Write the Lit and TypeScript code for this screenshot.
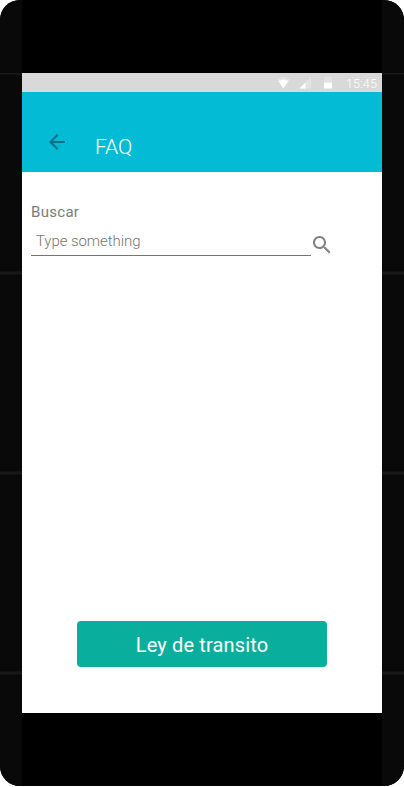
import { LitElement, html, css } from "lit";
import { customElement, property } from "lit/decorators.js";

@customElement("status-bar")
class StatusBar extends LitElement {
  @property() time = "15:45";

  static styles = css`
    :host {
      display: flex;
      align-items: center;
      justify-content: flex-end;
      height: 19px;
      padding-right: 5px;
      background: #d9d9d9;
      color: #fff;
      font: 300 12.5px/19px Roboto, sans-serif;
      letter-spacing: 0.15px;
      flex: none;
    }
    .icons {
      display: block;
      flex: none;
      margin-right: 11px;
    }
    .time {
      padding-top: 2px;
    }
  `;

  render() {
    return html`
      <svg class="icons" width="58" height="19" viewBox="0 0 58 19">
        <path d="M0 6.5Q6.5 1.5 13 6.5L6.5 15.5Z" fill="#fff" fill-opacity=".28" />
        <path d="M1.6 8Q6.5 5 11.4 8L6.5 15.5Z" fill="#fff" />
        <path d="M22.5 15.5L34 4V15.5Z" fill="#fff" fill-opacity=".28" />
        <path d="M22.5 15.5L28.5 9.5V15.5Z" fill="#fff" />
        <path d="M47 9.5V5.3Q47 4.5 47.8 4.5H49V3.5H53V4.5H54.2Q55 4.5 55 5.3V9.5Z" fill="#fff" fill-opacity=".28" />
        <path d="M47 9.5H55V14.7Q55 15.5 54.2 15.5H47.8Q47 15.5 47 14.7Z" fill="#fff" />
      </svg>
      <span class="time">${this.time}</span>
    `;
  }
}

@customElement("app-root")
class AppRoot extends LitElement {
  static styles = css`
    :host {
      display: block;
      height: 787px;
      background: #fff;
      font-family: Roboto, sans-serif;
    }
    * {
      box-sizing: border-box;
    }
    .device {
      display: flex;
      height: 786px;
      border-radius: 20px;
      overflow: hidden;
      background: #000;
    }
    .rail {
      width: 22px;
      flex: none;
      padding-top: 73px;
      background: #090909;
    }
    .seam {
      height: 4px;
      margin-bottom: 196px;
      background: linear-gradient(#111 0 1px, #181818 1px 3px, #111 3px);
    }
    .seam.first {
      height: 2px;
      background: linear-gradient(#191919 0 1px, #111 1px);
    }
    .screen {
      display: flex;
      flex-direction: column;
      width: 360px;
      height: 640px;
      margin-top: 73px;
      background: #fff;
    }
    .bar {
      display: flex;
      height: 80px;
      flex: none;
      background: #03bbd5;
      color: #fff;
    }
    .back {
      display: block;
      width: 24px;
      height: 24px;
      margin: 38px 0 0 22.5px;
    }
    .title {
      margin: 43px 0 0 26.5px;
      font: 300 21px/24px Roboto, sans-serif;
    }
    .content {
      display: flex;
      flex-direction: column;
      flex: 1;
      padding: 30px 9px 46px;
    }
    .label {
      height: 20px;
      color: #7b7b7b;
      font-size: 15px;
      line-height: 20px;
      letter-spacing: 0.3px;
    }
    .search {
      display: flex;
    }
    .field {
      width: 280px;
      height: 34px;
      border: 0;
      border-bottom: 1px solid #757575;
      padding: 5px 5px 0;
      color: #757575;
      font: 300 15px/28px Roboto, sans-serif;
      letter-spacing: -0.07px;
    }
    .find {
      display: block;
      width: 24px;
      height: 24px;
      margin: 11px 0 0 -1px;
    }
    .law {
      width: 250px;
      height: 46px;
      margin: auto auto 0;
      border: 0;
      border-radius: 4px;
      padding: 2px 0 0;
      background: #0aae9d;
      color: #fff;
      font: 400 20px/24px Roboto, sans-serif;
      letter-spacing: 0.15px;
    }
  `;

  private rail() {
    return html`<div class="rail">
      <div class="seam first"></div>
      <div class="seam"></div>
      <div class="seam"></div>
      <div class="seam"></div>
    </div>`;
  }

  render() {
    return html`
      <div class="device">
        ${this.rail()}
        <main class="screen">
          <status-bar></status-bar>
          <header class="bar">
            <svg class="back" viewBox="0 0 24 24">
              <path fill="#027185" d="M20 11H7.83l5.59-5.59L12 4l-8 8 8 8 1.41-1.41L7.83 13H20v-2z" />
            </svg>
            <div class="title">FAQ</div>
          </header>
          <section class="content">
            <div class="label">Buscar</div>
            <div class="search">
              <div class="field">Type something</div>
              <svg class="find" viewBox="0 0 24 24">
                <path fill="#808080" d="M15.5 14h-.79l-.28-.27C15.41 12.59 16 11.11 16 9.5 16 5.91 13.09 3 9.5 3S3 5.91 3 9.5 5.91 16 9.5 16c1.61 0 3.09-.59 4.23-1.57l.27.28v.79l5 4.99L20.49 19l-4.99-5zm-6 0C7.01 14 5 11.99 5 9.5S7.01 5 9.5 5 14 7.01 14 9.5 11.99 14 9.5 14z" />
              </svg>
            </div>
            <button class="law">Ley de transito</button>
          </section>
        </main>
        ${this.rail()}
      </div>
    `;
  }
}
